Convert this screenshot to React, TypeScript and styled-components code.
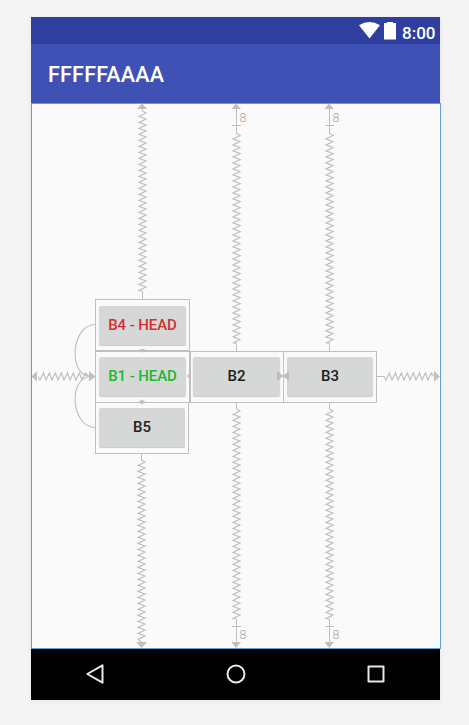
import React from 'react';
import styled, { createGlobalStyle } from 'styled-components';

const GlobalStyle = createGlobalStyle`
  * { box-sizing: border-box; }
  body { margin: 0; background: #f4f4f4; font-family: Roboto, sans-serif; overflow: hidden; }
`;

const Workspace = styled.main`
  width: 469px;
  height: 725px;
  padding: 17px 0 0 31px;
  background: #f4f4f4;
`;

const Device = styled.section`
  display: flex;
  flex-direction: column;
  width: 409px;
  height: 683px;
  box-shadow: 0 1px 5px 1px rgba(0, 0, 0, 0.045);
`;

const StatusBar = styled.div`
  display: flex;
  align-items: flex-start;
  height: 27px;
  padding: 5px 5px 0 328px;
  background: #303f9f;
  color: #fff;
`;

const StatusIcons = styled.svg`
  display: block;
  flex: none;
`;

const Clock = styled.span`
  margin-left: 4px;
  padding-top: 1px;
  font-size: 17px;
  line-height: 20px;
  font-weight: 500;
  white-space: nowrap;
`;

const AppBar = styled.header`
  display: flex;
  align-items: center;
  height: 59px;
  padding: 2px 17px 0;
  background: #3f51b5;
  color: #fff;
`;

const Title = styled.h1`
  margin: 0;
  font-size: 21.5px;
  font-weight: 500;
  line-height: 26px;
  letter-spacing: 0.2px;
`;

const Canvas = styled.div`
  position: relative;
  width: 410px;
  height: 546px;
  flex: none;
  background: #fafafa;
  box-shadow: inset 0 0 0 1px #5f9fd6;
`;

const Constraints = styled.svg`
  position: absolute;
  inset: 0;
`;

const Widget = styled.button<{ $x: number; $y: number; $w: number; $color: string }>`
  position: absolute;
  left: ${p => p.$x}px;
  top: ${p => p.$y}px;
  width: ${p => p.$w}px;
  height: 39px;
  padding: 0 0 1px;
  border: 0;
  border-radius: 2px;
  background: #d6d7d7;
  box-shadow: 0 1px 1px rgba(0, 0, 0, 0.2);
  color: ${p => p.$color};
  font: 500 15px/38px Roboto, sans-serif;
  letter-spacing: -0.1px;
  text-align: center;
  white-space: nowrap;
`;

const NavBar = styled.nav`
  display: flex;
  justify-content: space-between;
  align-items: center;
  height: 51px;
  padding: 0 52px 1px;
  background: #000;
`;

const NavIcon = styled.svg`
  display: block;
`;

/* Spring from a to b along one axis, with a tooth every six pixels. */
function spring(vertical: boolean, centre: number, a: number, b: number) {
  const pt = (along: number, off: number) =>
    vertical ? `${centre + off} ${along}` : `${along} ${centre + off}`;
  let d = `M${pt(a, 0)}`;
  let p = a + 2;
  while (p + 3.4 <= b) {
    d += `L${pt(p, 3.5)}L${pt(p + 3.4, -3.5)}`;
    p += 6;
  }
  return d + `L${pt(b, 0)}`;
}

const Label8 = ({ x, y }: { x: number; y: number }) => (
  <text x={x} y={y} fontFamily="Roboto, sans-serif" fontWeight="300" fontSize="12.5">8</text>
);

const outlines: [number, number, number, number][] = [
  [64.5, 196.5, 94, 51],
  [64.5, 248.5, 94, 51],
  [64.5, 299.5, 93, 51],
  [159.5, 248.5, 93, 51],
  [252.5, 248.5, 93, 51],
];

const Column = ({ x }: { x: number }) => (
  <g>
    <path d={`M${x} 6V31M${x - 4.5} 22.5h9M${x} 240V248M${x} 300V306M${x} 516V540M${x - 4.5} 523.5h9`} />
    <path d={spring(true, x, 30.5, 240)} strokeWidth="1.15" />
    <path d={spring(true, x, 306, 516)} strokeWidth="1.15" />
    <path d={`M${x - 5} 6L${x - 0.5} .5L${x + 4.500} 6ZM${x - 5} 539L${x - 0.5} 545L${x + 4.500} 539Z`} fill="#c0c0c0" stroke="none" />
  </g>
);

const Blueprint = () => (
  <Constraints width="410" height="546" viewBox="0 0 410 546" fill="none" stroke="#bfbfbf" strokeWidth="1">
    <path d="M111.500 6V8M111.500 188V196M110.500 351V357M346 273.500H353" />
    <g strokeWidth="1.15">
      <path d={spring(true, 111.5, 8, 188)} />
      <path d={spring(true, 110.5, 357, 539)} />
      <path d={spring(false, 273.5, 7, 58)} />
      <path d={spring(false, 273.5, 353, 403)} />
    </g>
    <Column x={205.5} />
    <Column x={298.5} />
    <path d="M64 221.500C40 222 37 272 59 273.500M64 324.500C40 324 37 275 59 273.500" strokeWidth="1.15" />
    {outlines.map(([x, y, w, h], i) => (
      <rect key={i} x={x} y={y} width={w} height={h} />
    ))}
    <g fill="#c0c0c0" stroke="none">
      <path d="M106 6L111 .5L116 6ZM105 539L110.500 545L116 539Z" />
      <path d="M6 268L.5 273.500L6 278.500ZM58 268L64.500 273.500L58 278.500ZM403 268L409 273.500L403 278.500Z" />
      <path d="M108 247l2-1h3l1.500 1v1l-3.500 1.500l-3-1.500zM107.500 299l3.500-2.500l3.500 2.500l-3.500 2.500z" />
      <path d="M156 273l2-2.500l2 2.500l-2 2.500z" />
    </g>
    <g stroke="none" fill="#a8a8a8">
      <Label8 x={208.5} y={19.3} />
      <Label8 x={301.5} y={19.3} />
      <Label8 x={208.5} y={536} />
      <Label8 x={301.5} y={536} />
    </g>
  </Constraints>
);

const Overlay = () => (
  <Constraints width="410" height="546" viewBox="0 0 410 546">
    <path d="M246 268L252.500 273L246 278ZM258 268L252 273L258 278Z" fill="#bcbcbc" />
  </Constraints>
);

const widgets = [
  { x: 68, y: 203, w: 87, text: 'B4 - HEAD', color: '#d32f2f' },
  { x: 68, y: 254, w: 87, text: 'B1 - HEAD', color: '#20b82c' },
  { x: 68, y: 305, w: 86, text: 'B5', color: '#202020' },
  { x: 162, y: 254, w: 87, text: 'B2', color: '#202020' },
  { x: 256, y: 254, w: 86, text: 'B3', color: '#202020' },
];

export default function App() {
  return (
    <>
      <GlobalStyle />
      <Workspace>
        <Device>
          <StatusBar>
            <StatusIcons width="39" height="19" viewBox="0 0 39 19" fill="#fff">
              <path d="M0 3.200Q10.500-3.200 21 3.200L10.500 16.500Z" />
              <path d="M25 1H28V0H34V1H37V17.500H25Z" />
            </StatusIcons>
            <Clock>8:00</Clock>
          </StatusBar>
          <AppBar>
            <Title>FFFFFAAAA</Title>
          </AppBar>
          <Canvas>
            <Blueprint />
            {widgets.map(w => (
              <Widget key={w.text} $x={w.x} $y={w.y} $w={w.w} $color={w.color}>{w.text}</Widget>
            ))}
            <Overlay />
          </Canvas>
          <NavBar>
            <NavIcon width="24" height="24" viewBox="0 0 24 24" fill="none" stroke="#e8e8e8" strokeWidth="2" strokeLinejoin="round">
              <path d="M19.500 3.300V20.700L4.300 12Z" />
            </NavIcon>
            <NavIcon width="24" height="24" viewBox="0 0 24 24" fill="none" stroke="#e8e8e8" strokeWidth="2">
              <circle cx="12" cy="12" r="8.500" />
            </NavIcon>
            <NavIcon width="24" height="24" viewBox="0 0 24 24" fill="none" stroke="#e8e8e8" strokeWidth="2" strokeLinejoin="round">
              <rect x="4.500" y="4.500" width="15" height="15" />
            </NavIcon>
          </NavBar>
        </Device>
      </Workspace>
    </>
  );
}
